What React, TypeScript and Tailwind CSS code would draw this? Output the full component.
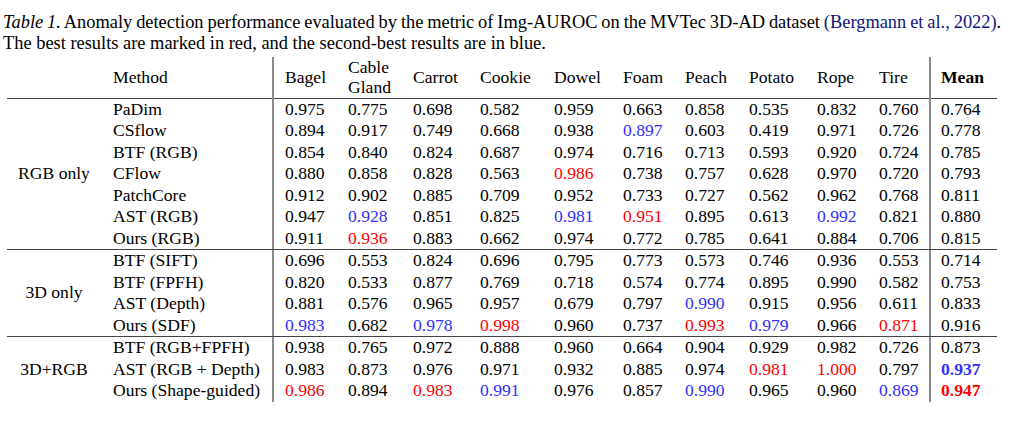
import React from "react";

type Tone = "r" | "b" | "";
type Row = { method: string; vals: string[]; tones?: Record<number, Tone>; boldMean?: boolean };

const COLS = ["Bagel", "Cable", "Carrot", "Cookie", "Dowel", "Foam", "Peach", "Potato", "Rope", "Tire"];

const GROUPS: { label: string; rows: Row[] }[] = [
  {
    label: "RGB only",
    rows: [
      { method: "PaDim", vals: ["0.975", "0.775", "0.698", "0.582", "0.959", "0.663", "0.858", "0.535", "0.832", "0.760", "0.764"] },
      { method: "CSflow", vals: ["0.894", "0.917", "0.749", "0.668", "0.938", "0.897", "0.603", "0.419", "0.971", "0.726", "0.778"], tones: { 5: "b" } },
      { method: "BTF (RGB)", vals: ["0.854", "0.840", "0.824", "0.687", "0.974", "0.716", "0.713", "0.593", "0.920", "0.724", "0.785"] },
      { method: "CFlow", vals: ["0.880", "0.858", "0.828", "0.563", "0.986", "0.738", "0.757", "0.628", "0.970", "0.720", "0.793"], tones: { 4: "r" } },
      { method: "PatchCore", vals: ["0.912", "0.902", "0.885", "0.709", "0.952", "0.733", "0.727", "0.562", "0.962", "0.768", "0.811"] },
      { method: "AST (RGB)", vals: ["0.947", "0.928", "0.851", "0.825", "0.981", "0.951", "0.895", "0.613", "0.992", "0.821", "0.880"], tones: { 1: "b", 4: "b", 5: "r", 8: "b" } },
      { method: "Ours (RGB)", vals: ["0.911", "0.936", "0.883", "0.662", "0.974", "0.772", "0.785", "0.641", "0.884", "0.706", "0.815"], tones: { 1: "r" } },
    ],
  },
  {
    label: "3D only",
    rows: [
      { method: "BTF (SIFT)", vals: ["0.696", "0.553", "0.824", "0.696", "0.795", "0.773", "0.573", "0.746", "0.936", "0.553", "0.714"] },
      { method: "BTF (FPFH)", vals: ["0.820", "0.533", "0.877", "0.769", "0.718", "0.574", "0.774", "0.895", "0.990", "0.582", "0.753"] },
      { method: "AST (Depth)", vals: ["0.881", "0.576", "0.965", "0.957", "0.679", "0.797", "0.990", "0.915", "0.956", "0.611", "0.833"], tones: { 6: "b" } },
      { method: "Ours (SDF)", vals: ["0.983", "0.682", "0.978", "0.998", "0.960", "0.737", "0.993", "0.979", "0.966", "0.871", "0.916"], tones: { 0: "b", 2: "b", 3: "r", 6: "r", 7: "b", 9: "r" } },
    ],
  },
  {
    label: "3D+RGB",
    rows: [
      { method: "BTF (RGB+FPFH)", vals: ["0.938", "0.765", "0.972", "0.888", "0.960", "0.664", "0.904", "0.929", "0.982", "0.726", "0.873"] },
      { method: "AST (RGB + Depth)", vals: ["0.983", "0.873", "0.976", "0.971", "0.932", "0.885", "0.974", "0.981", "1.000", "0.797", "0.937"], tones: { 7: "r", 8: "r", 10: "b" }, boldMean: true },
      { method: "Ours (Shape-guided)", vals: ["0.986", "0.894", "0.983", "0.991", "0.976", "0.857", "0.990", "0.965", "0.960", "0.869", "0.947"], tones: { 0: "r", 2: "r", 3: "b", 6: "b", 9: "b", 10: "r" }, boldMean: true },
    ],
  },
];

const GRID = "grid grid-cols-[94px_173px_74px_65px_67px_74px_69px_62px_64px_68px_62px_52px_66px]";
const VRULE = "border-r-2 border-[#8a8a8a]";

const tone = (t?: Tone) => (t === "r" ? "text-[#ff0000]" : t === "b" ? "text-[#3030ff]" : "");

export default function App() {
  return (
    <div className="min-h-[421px] bg-white pl-[3px] pt-[11.5px] font-['Liberation_Serif',serif] text-black">
      <p className="text-[18.4px] leading-[21.5px] whitespace-nowrap">
        <span className="[word-spacing:-0.7px]">
          <i>Table 1.</i> Anomaly detection performance evaluated by the metric of Img-AUROC on the MVTec 3D-AD dataset{" "}
          <span className="text-[#14147f]">(Bergmann et al., 2022)</span>.
        </span>
        <br />
        The best results are marked in red, and the second-best results are in blue.
      </p>

      <div className="mt-[2px] ml-[4px] w-[990px] text-[17.6px] leading-[21.5px]">
        <div className={`${GRID} h-[42px] border-b border-[#444] leading-[20px]`}>
          <div />
          <div className={`flex items-center pb-[3px] pl-[12px] ${VRULE}`}>Method</div>
          {COLS.map((c, i) => (
            <div
              key={c}
              className={`flex items-center pb-[3px] ${i === 0 ? "pl-[11px]" : ""} ${i === COLS.length - 1 ? VRULE : ""}`}
            >
              {c === "Cable" ? (
                <span>
                  Cable
                  <br />
                  Gland
                </span>
              ) : (
                c
              )}
            </div>
          ))}
          <div className="flex items-center pb-[3px] pl-[10px] font-bold">Mean</div>
        </div>

        {GROUPS.map((g, gi) => (
          <div
            key={g.label}
            className={`${GRID} ${gi < GROUPS.length - 1 ? "border-b border-[#444]" : ""}`}
            style={{ gridTemplateRows: `repeat(${g.rows.length}, 21.5px)` }}
          >
            <div className="flex items-center justify-center" style={{ gridRow: `span ${g.rows.length}` }}>
              {g.label}
            </div>
            {g.rows.map((r) => (
              <React.Fragment key={r.method}>
                <div className={`pl-[12px] whitespace-nowrap ${VRULE}`}>{r.method}</div>
                {r.vals.map((v, i) => (
                  <div
                    key={i}
                    className={[
                      i === 0 ? "pl-[11px]" : "",
                      i === 9 ? VRULE : "",
                      i === 10 ? "pl-[10px]" : "",
                      i === 10 && r.boldMean ? "font-bold" : "",
                      tone(r.tones?.[i]),
                    ].join(" ")}
                  >
                    {v}
                  </div>
                ))}
              </React.Fragment>
            ))}
          </div>
        ))}
      </div>
    </div>
  );
}
